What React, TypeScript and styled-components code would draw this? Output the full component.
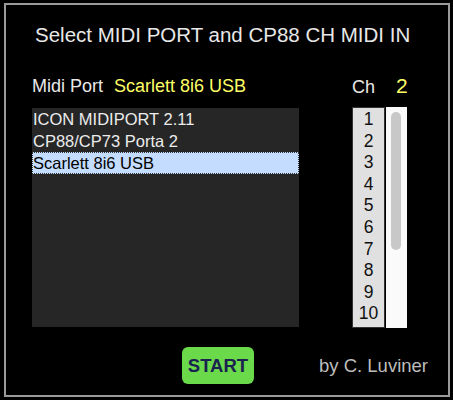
import React, { useState } from 'react';
import styled, { createGlobalStyle } from 'styled-components';

const GlobalStyle = createGlobalStyle`
  html, body {
    margin: 0;
    padding: 0;
    background: #000;
  }
  body {
    font-family: "Liberation Sans", Arial, Helvetica, sans-serif;
  }
`;

const Frame = styled.div`
  box-sizing: border-box;
  width: 446px;
  height: 394px;
  margin: 3px 0 0 4px;
  border: 2px solid #9a9a9a;
  background: #000;
  display: flex;
  flex-direction: column;
`;

const Title = styled.h1`
  margin: 18px 0 0 29px;
  font-size: 20.5px;
  line-height: 24px;
  font-weight: normal;
  color: #e8e8e8;
`;

const Body = styled.div`
  display: flex;
  margin: 26px 0 0 26px;
`;

const PortColumn = styled.div`
  display: flex;
  flex-direction: column;
  width: 267px;
`;

const LabelRow = styled.div`
  display: flex;
  align-items: baseline;
  gap: 11px;
  box-sizing: border-box;
  height: 24px;
  padding-top: 2px;
  margin-bottom: 11px;
  font-size: 18px;
  line-height: 22px;
  color: #e8e8e8;
`;

const Value = styled.span<{ $big?: boolean }>`
  color: #ffff66;
  font-size: ${p => (p.$big ? '21px' : '18px')};
`;

const PortList = styled.ul`
  list-style: none;
  margin: 0;
  padding: 0;
  height: 219px;
  background: #262626;
`;

const PortItem = styled.li<{ $selected?: boolean }>`
  box-sizing: border-box;
  height: 22px;
  line-height: 20px;
  font-size: 16.5px;
  color: ${p => (p.$selected ? '#000' : '#ececec')};
  background: ${p => (p.$selected ? '#c4dcfd' : 'transparent')};
  border: 1px ${p => (p.$selected ? 'dotted #333' : 'solid transparent')};
  cursor: default;
`;

const ChColumn = styled.div`
  display: flex;
  flex-direction: column;
  margin-left: 53px;
`;

const ChHeader = styled(LabelRow)`
  gap: 21px;
  margin-bottom: 10px;
`;

const ChPicker = styled.div`
  display: flex;
  gap: 1px;
  height: 221px;
`;

const ChList = styled.ul`
  list-style: none;
  margin: 0;
  padding: 1px 0 0;
  box-sizing: border-box;
  width: 33px;
  background: #e0e0e0;
  border: 1px solid #333;
`;

const ChItem = styled.li`
  height: 21.6px;
  line-height: 21.6px;
  text-align: center;
  font-size: 17.5px;
  color: #111;
  cursor: default;
`;

const ScrollTrack = styled.div`
  box-sizing: border-box;
  width: 21px;
  background: #fafafa;
  padding: 5px 5px;
`;

const ScrollThumb = styled.div`
  width: 10px;
  height: 138px;
  border-radius: 5px;
  background: #c8c8c8;
`;

const Footer = styled.div`
  display: flex;
  align-items: center;
  margin: 19px 0 0 176px;
`;

const StartButton = styled.button`
  width: 72px;
  height: 37px;
  border: none;
  border-radius: 6px;
  background: #6ad94a;
  color: #1a2250;
  font-family: "Liberation Sans", Arial, sans-serif;
  font-weight: bold;
  font-size: 18.5px;
  padding: 0;
`;

const Credit = styled.span`
  margin-left: 65px;
  font-size: 18.5px;
  color: #bdbdbd;
`;

const ports = ['ICON MIDIPORT 2.11', 'CP88/CP73 Porta 2', 'Scarlett 8i6 USB'];
const channels = [1, 2, 3, 4, 5, 6, 7, 8, 9, 10];

const App: React.FC = () => {
  const [port, setPort] = useState('Scarlett 8i6 USB');
  const [channel, setChannel] = useState(2);

  return (
    <>
      <GlobalStyle />
      <Frame>
        <Title>Select MIDI PORT and CP88 CH MIDI IN</Title>
        <Body>
          <PortColumn>
            <LabelRow>
              Midi Port<Value>{port}</Value>
            </LabelRow>
            <PortList>
              {ports.map(p => (
                <PortItem key={p} $selected={p === port} onClick={() => setPort(p)}>{p}</PortItem>
              ))}
            </PortList>
          </PortColumn>
          <ChColumn>
            <ChHeader>
              Ch<Value $big>{channel}</Value>
            </ChHeader>
            <ChPicker>
              <ChList>
                {channels.map(c => (
                  <ChItem key={c} onClick={() => setChannel(c)}>{c}</ChItem>
                ))}
              </ChList>
              <ScrollTrack>
                <ScrollThumb />
              </ScrollTrack>
            </ChPicker>
          </ChColumn>
        </Body>
        <Footer>
          <StartButton>START</StartButton>
          <Credit>by C. Luviner</Credit>
        </Footer>
      </Frame>
    </>
  );
};

export default App;
